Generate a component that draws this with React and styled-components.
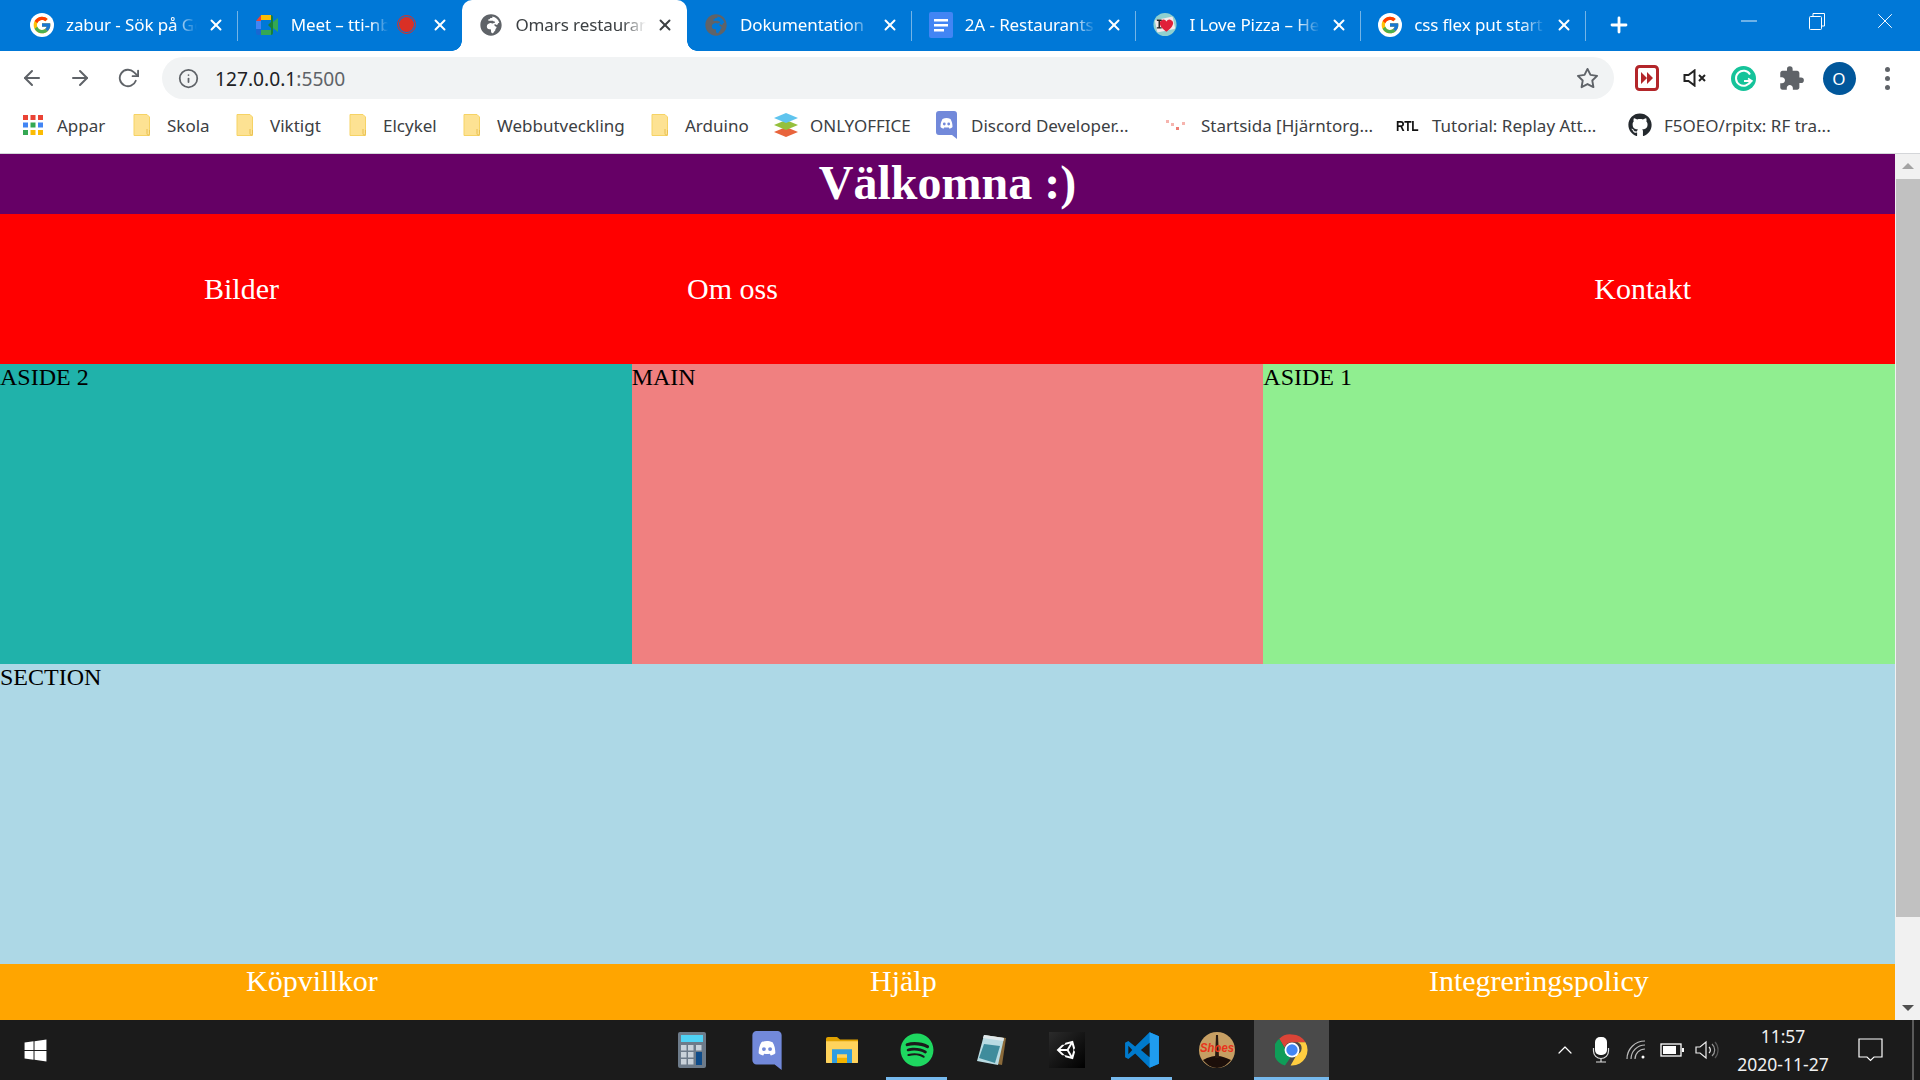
import React from "react";
import styled, { createGlobalStyle } from "styled-components";
import { FcGoogle } from "react-icons/fc";
import { FaGithub, FaSpotify, FaWindows, FaGlobeAfrica, FaUnity } from "react-icons/fa";
import { MdExtension } from "react-icons/md";
import { FiArrowLeft, FiArrowRight, FiRotateCw, FiInfo, FiStar, FiX, FiPlus, FiChevronUp, FiMinus } from "react-icons/fi";

const GlobalStyle = createGlobalStyle`
	html, body {
		margin: 0;
		padding: 0;
		overflow: hidden;
		background: #fff;
	}
	* { box-sizing: border-box; }
`;

const Screen = styled.div`
	width: 1920px;
	height: 1080px;
	display: flex;
	flex-direction: column;
	font-family: "Noto Sans", "Open Sans", sans-serif;
`;

// ---- browser chrome ----
const TabStrip = styled.div`
	height: 51px;
	background: #0078d7;
	display: flex;
	align-items: stretch;
	padding-left: 13px;
	flex: none;
`;
const Tab = styled.div`
	width: 224.7px;
	height: 51px;
	padding: 0 0 2px 17px;
	display: flex;
	align-items: center;
	position: relative;
	flex: none;
	color: ${({ $active }) => ($active ? "#3c4043" : "#fff")};
	background: ${({ $active }) => ($active ? "#fff" : "transparent")};
	border-radius: ${({ $active }) => ($active ? "10px 10px 0 0" : "0")};

	// separator line, or the flared foot of the active tab
	&::after {
		content: "";
		position: absolute;
		display: ${({ $sep, $active }) => ($sep || $active ? "block" : "none")};
		top: ${({ $active }) => ($active ? "41px" : "11px")};
		right: ${({ $active }) => ($active ? "-10px" : "0")};
		width: ${({ $active }) => ($active ? "10px" : "1px")};
		height: 30px;
		height: ${({ $active }) => ($active ? "10px" : "30px")};
		background: ${({ $active }) =>
			$active ? "radial-gradient(circle at 100% 0, transparent 9.5px, #fff 10px)" : "#74b4e6"};
	}
	&::before {
		content: "";
		position: absolute;
		display: ${({ $active }) => ($active ? "block" : "none")};
		top: 41px;
		left: -10px;
		width: 10px;
		height: 10px;
		background: radial-gradient(circle at 0 0, transparent 9.5px, #fff 10px);
	}
`;
const Favicon = styled.span`
	width: 24px;
	height: 24px;
	flex: none;
	display: flex;
	align-items: center;
	justify-content: center;
	border-radius: ${({ $round }) => ($round ? "50%" : "0")};
	background: ${({ $round }) => ($round ? "#fff" : "transparent")};
	color: #5f6368;
`;
const TabTitle = styled.span`
	margin-left: 12px;
	width: ${({ $short }) => ($short ? "97px" : "131px")};
	flex: none;
	overflow: hidden;
	white-space: nowrap;
	font-size: 17px;
	letter-spacing: -0.1px;
	-webkit-mask-image: linear-gradient(to right, #000 82%, transparent 100%);
	mask-image: linear-gradient(to right, #000 82%, transparent 100%);
`;
const RecDot = styled.span`
	width: 15px;
	height: 15px;
	margin-left: 11px;
	border-radius: 50%;
	flex: none;
	background: #d93025;
	outline: 1px solid #d93025;
	outline-offset: 1px;
`;
const TabClose = styled.span`
	position: absolute;
	right: 13px;
	top: 16px;
	display: flex;
	color: ${({ $active }) => ($active ? "#3c4043" : "#fff")};
`;
const NewTab = styled.div`
	width: 66px;
	display: flex;
	align-items: center;
	justify-content: center;
	color: #fff;
	padding-bottom: 2px;
`;
const WindowControls = styled.div`
	margin-left: auto;
	padding-right: 1px;
	display: flex;
	color: #fff;
`;
const WindowButton = styled.div`
	width: 68px;
	height: 42px;
	display: flex;
	align-items: center;
	justify-content: center;
`;

const Toolbar = styled.div`
	height: 54px;
	flex: none;
	background: #fff;
	display: flex;
	align-items: center;
	padding-left: 8px;
	color: #5f6368;
`;
const NavIcon = styled.div`
	width: 48px;
	display: flex;
	justify-content: center;
	flex: none;
`;
const Omnibox = styled.div`
	margin: 0 9px 0 10px;
	width: 1452px;
	height: 42px;
	border-radius: 21px;
	background: #f1f3f4;
	display: flex;
	align-items: center;
	padding: 0 15px 0 16px;
	flex: none;
`;
const Url = styled.span`
	margin-left: 16px;
	font-size: 19.2px;
	color: #202124;
	span {
		color: #5f6368;
	}
`;
const StarSlot = styled.span`
	margin-left: auto;
	display: flex;
`;
const Extension = styled.div`
	width: 48px;
	display: flex;
	justify-content: center;
	align-items: center;
	flex: none;
`;
const Avatar = styled.div`
	width: 33px;
	height: 33px;
	border-radius: 50%;
	background: #01579b;
	color: #fff;
	font-size: 17px;
	display: flex;
	align-items: center;
	justify-content: center;
`;
const MenuDots = styled.div`
	display: flex;
	flex-direction: column;
	gap: 4px;
	span {
		width: 5px;
		height: 5px;
		border-radius: 50%;
		background: #5f6368;
	}
`;

const BookmarkBar = styled.div`
	height: 49px;
	flex: none;
	display: flex;
	align-items: center;
	padding: 0 0 8px 23px;
	background: #fff;
	border-bottom: 1px solid #d4d6d9;
`;
const Bookmark = styled.div`
	width: ${({ $w }) => $w}px;
	flex: none;
	display: flex;
	align-items: center;
	gap: ${({ $gap }) => $gap ?? 16}px;
	font-size: 17px;
	color: #3c4043;
	white-space: nowrap;
`;

// ---- the page itself ----
const Viewport = styled.div`
	flex: 1;
	min-height: 0;
	display: flex;
`;
const Page = styled.div`
	width: 1895px;
	display: flex;
	flex-direction: column;
	font-family: "Liberation Serif", "Times New Roman", serif;
`;
const Banner = styled.h1`
	margin: 0;
	height: 60px;
	background: #660066;
	color: #fff;
	font-size: 48px;
	line-height: 57px;
	text-align: center;
	font-weight: bold;
`;
const MainNav = styled.nav`
	height: 150px;
	background: #f00;
	color: #fff;
	font-size: 30px;
	display: flex;
	align-items: center;
	padding: 0 204px 0 204px;
`;
const NavLink = styled.a`
	margin-left: ${({ $left }) => $left || "0"};
`;
const Row = styled.div`
	display: grid;
	grid-template-columns: 1fr 1fr 1fr;
`;
const Panel = styled.div`
	height: 300px;
	font-size: 24px;
	line-height: 27px;
	color: #000;
	background: ${({ $bg }) => $bg};
`;
const SiteFooter = styled.footer`
	height: 56px;
	background: #ffa500;
	color: #fff;
	font-size: 30px;
	line-height: 34px;
	display: flex;
	justify-content: space-around;
`;

const Scrollbar = styled.div`
	width: 25px;
	background: #f1f1f1;
	display: flex;
	flex-direction: column;
	align-items: center;
	justify-content: space-between;
	position: relative;
`;
const ScrollArrow = styled.div`
	width: 0;
	height: 0;
	margin: 9px 0;
	border-left: 6px solid transparent;
	border-right: 6px solid transparent;
	border-bottom: ${({ $up }) => ($up ? "6px solid #a3a3a3" : "0")};
	border-top: ${({ $up }) => ($up ? "0" : "6px solid #505050")};
`;
const ScrollThumb = styled.div`
	position: absolute;
	top: 25px;
	left: 1px;
	right: 0;
	height: 738px;
	background: #c1c1c1;
`;

// ---- windows taskbar ----
const Taskbar = styled.div`
	height: 60px;
	flex: none;
	background: #1b1b1b;
	display: flex;
	align-items: center;
	color: #fff;
`;
const StartButton = styled.div`
	width: 70px;
	display: flex;
	justify-content: center;
`;
const PinnedApps = styled.div`
	margin-left: 584px;
	display: flex;
	height: 60px;
`;
const AppSlot = styled.div`
	width: 75px;
	height: 60px;
	padding: 0 1px;
	display: flex;
	align-items: center;
	justify-content: center;
	position: relative;
	background: ${({ $active }) => ($active ? "#4a4a4a" : "transparent")};
	&::after {
		content: "";
		position: absolute;
		bottom: 0;
		height: 3px;
		left: ${({ $active }) => ($active ? "0" : "7px")};
		right: ${({ $active }) => ($active ? "0" : "7px")};
		background: #76b9ed;
		display: ${({ $open }) => ($open ? "block" : "none")};
	}
`;
const Tray = styled.div`
	margin-left: auto;
	display: flex;
	align-items: center;
	height: 60px;
`;
const TrayIcon = styled.div`
	width: 35.500px;
	display: flex;
	justify-content: center;
	align-items: center;
`;
const Clock = styled.div`
	width: 112px;
	margin-left: 2px;
	text-align: center;
	font-size: 17.500px;
	line-height: 28px;
	color: #f0f0f0;
`;
const Notification = styled.div`
	width: 73px;
	padding-right: 10px;
	display: flex;
	justify-content: center;
`;
const DesktopEdge = styled.div`
	width: 2px;
	height: 60px;
	margin-right: 6px;
	background: #5a5a5a;
`;

// ---- drawn icons ----
const MeetIcon = () => (
	<svg width="24" height="22" viewBox="0 0 24 22">
		<path d="M6 1h10v5H6z" fill="#fbbc04" />
		<path d="M6 1v6H1z" fill="#ea4335" />
		<path d="M1 7h5v8H1z" fill="#4285f4" />
		<path d="M1 15h5v6H3a2 2 0 0 1-2-2z" fill="#1967d2" />
		<path d="M6 16h10v5H6z" fill="#34a853" />
		<path d="M16 1v7l-3 3 3 3v7h0a2 2 0 0 0 2-2V3a2 2 0 0 0-2-2z" fill="#188038" />
		<path d="M18 8l5-4v14l-5-4z" fill="#34a853" />
	</svg>
);
const DocsIcon = () => (
	<svg width="24" height="26" viewBox="0 0 24 26">
		<rect width="24" height="26" rx="2" fill="#4285f4" />
		<path d="M5 7h14v2.600H5zM5 12h14v2.600H5zM5 17h10v2.600H5z" fill="#fff" />
	</svg>
);
const PizzaIcon = () => (
	<svg width="25" height="25" viewBox="0 0 25 25">
		<circle cx="12.500" cy="12.500" r="12" fill="#8fd0cf" />
		<rect x="3" y="6" width="19" height="13" rx="1" fill="#f4e9ea" transform="rotate(-12 12.500 12.500)" />
		<path d="M14 20s-7-4.500-7-9a3.700 3.700 0 0 1 7-1.600A3.700 3.700 0 0 1 21 11c0 4.500-7 9-7 9z" fill="#e0203a" />
		<path d="M4 8h5M6.500 8v8M4 16h5" stroke="#222" strokeWidth="1.500" />
	</svg>
);
const AppsGrid = () => (
	<svg width="20" height="20" viewBox="0 0 20 20">
		{["#ea4335", "#ea4335", "#ea4335", "#4285f4", "#34a853", "#4285f4", "#34a853", "#fbbc04", "#fbbc04"].map((c, i) => (
			<rect key={i} x={(i % 3) * 7.500} y={Math.floor(i / 3) * 7.500} width="5" height="5" fill={c} />
		))}
	</svg>
);
const FolderIcon = () => (
	<svg width="18" height="22" viewBox="0 0 18 22">
		<path d="M1 .5h13l2.500 2.500v18.500H1z" fill="#fde293" stroke="#f6d365" />
		<path d="M14 15v4.500c0 2 2.500 2 2.500 0V16" fill="none" stroke="#e8bf50" />
	</svg>
);
const OnlyOfficeIcon = () => (
	<svg width="26" height="24" viewBox="0 0 26 24">
		<path d="M13 14l12 5-12 5-12-5z" fill="#e8643c" />
		<path d="M13 7l12 5-12 5-12-5z" fill="#95c03c" />
		<path d="M13 0l12 5-12 5L1 5z" fill="#5fc4ee" />
	</svg>
);
const DiscordTile = ({ size = 21, tall = 25 }) => (
	<svg width={size} height={tall + 3} viewBox="0 0 21 28">
		<path d="M3 0h15a3 3 0 0 1 3 3v25l-5-4H3a3 3 0 0 1-3-3V3a3 3 0 0 1 3-3z" fill="#7289da" />
		<path d="M6.500 8c3-1.200 5-1.200 8 0 1.500 2.500 2 5 2 8-1 1-2.500 1.500-3.300 1.500l-.7-1.200c-1.500.4-2.500.4-4 0l-.7 1.200C7 17.500 5.500 17 4.500 16c0-3 .5-5.500 2-8z" fill="#fff" />
		<circle cx="8.300" cy="13" r="1.400" fill="#7289da" />
		<circle cx="12.700" cy="13" r="1.400" fill="#7289da" />
	</svg>
);
const HjarntorgetIcon = () => (
	<svg width="22" height="14" viewBox="0 0 22 14">
		<g fill="#f6b4ae">
			<rect x="1" y="2" width="3" height="3" />
			<rect x="6" y="5" width="3" height="3" />
			<rect x="11" y="9" width="3" height="3" fill="#ee7d74" />
			<rect x="17" y="4" width="3" height="3" />
		</g>
	</svg>
);
const RtlIcon = styled.span`
	font-family: "Liberation Sans", sans-serif;
	font-size: 15px;
	font-weight: bold;
	color: #111;
	width: 24px;
	letter-spacing: -0.500px;
	flex: none;
	transform: scaleX(0.8);
	transform-origin: left center;
	margin-right: 12px;
`;
const ForwardBadge = () => (
	<svg width="24" height="26" viewBox="0 0 24 26">
		<rect x="1.500" y="1.500" width="21" height="23" rx="3" fill="#fff" stroke="#b3262a" strokeWidth="3" />
		<path d="M6 7l6 6-6 6zM12 7l6 6-6 6z" fill="#b3262a" />
	</svg>
);
const MuteIcon = () => (
	<svg width="24" height="18" viewBox="0 0 24 18">
		<path d="M1.500 6h4l6-4.500v15l-6-4.500h-4z" fill="none" stroke="#222" strokeWidth="2" />
		<path d="M16 6l6 6M22 6l-6 6" stroke="#222" strokeWidth="2" />
	</svg>
);
const GrammarlyIcon = () => (
	<svg width="25" height="25" viewBox="0 0 25 25">
		<circle cx="12.500" cy="12.500" r="12.500" fill="#15c39a" />
		<path d="M19 8.500A7.500 7.500 0 1 0 19.500 15H13" fill="none" stroke="#fff" strokeWidth="2" />
		<path d="M17 12.500l4 2.500-3 3" fill="none" stroke="#fff" strokeWidth="1.500" />
	</svg>
);
const CalcIcon = () => (
	<svg width="28" height="36" viewBox="0 0 28 36">
		<rect width="28" height="36" rx="2" fill="#6d7b8a" />
		<rect x="3" y="3" width="22" height="7" fill="#4fd2f5" />
		{[[3, 13], [10, 13], [18, 13], [3, 20], [10, 20], [3, 27], [10, 27]].map(([x, y]) => (
			<rect key={`${x}-${y}`} x={x} y={y} width="5.500" height="5.500" fill="#c9d2da" />
		))}
		<rect x="18" y="20" width="6" height="13" fill="#0f4c8a" />
	</svg>
);
const ExplorerIcon = () => (
	<svg width="32" height="26" viewBox="0 0 32 30" preserveAspectRatio="none">
		<path d="M0 2a2 2 0 0 1 2-2h9l3 3h18v7H0z" fill="#e0a100" />
		<path d="M0 5h32v24a1 1 0 0 1-1 1H1a1 1 0 0 1-1-1z" fill="#ffd35c" />
		<path d="M6 14h20v16h-5v-10H11v10H6z" fill="#2f9de0" />
		<rect x="11" y="24" width="10" height="6" fill="#f4b400" />
	</svg>
);
const NotepadIcon = () => (
	<svg width="32" height="32" viewBox="0 0 32 32">
		<path d="M8 1l22 3-4 27-5-1z" fill="#8a6a3a" />
		<path d="M8 1l20 3-6 27-21-4z" fill="#b9dbe2" />
		<path d="M3 24L8 10l16 2-5 17z" fill="#3f8c9c" />
		<path d="M8 1l20 3-.7 3L7 4z" fill="#dfe7ea" />
	</svg>
);
const UnityTile = styled.div`
	width: 36px;
	height: 36px;
	background: linear-gradient(135deg, #2b2b2b, #000);
	display: flex;
	align-items: center;
	justify-content: center;
	color: #fff;
`;
const VsCodeIcon = () => (
	<svg width="36" height="36" viewBox="0 0 100 100">
		<path d="M71 99L31 60 12 75 3 70V30l9-5 19 15L71 1l26 11v76z" fill="#007acc" />
		<path d="M71 99V1l26 11v76z" fill="#1f9cf0" />
		<path d="M71 30L47 50l24 20z" fill="#1b1b1b" />
		<path d="M12 38v24l11-12z" fill="#1b1b1b" />
	</svg>
);
const ShoesIcon = () => (
	<svg width="36" height="36" viewBox="0 0 36 36">
		<ellipse cx="18" cy="18" rx="18" ry="18" fill="#c79f63" />
		<path d="M4 28c6-3 9-4 14-4s9 2 14 4c-4 5-9 8-14 8S8 33 4 28z" fill="#1c0f0a" />
		<path d="M17 3h2l1 23h-4z" fill="#2a1a12" />
		<text x="18" y="20" textAnchor="middle" fontFamily="Liberation Sans" fontStyle="italic" fontSize="13" fontWeight="bold" fill="#e8341c" textLength="34" lengthAdjust="spacingAndGlyphs">
			Shoes
		</text>
	</svg>
);
const ChromeIcon = () => (
	<svg width="34" height="34" viewBox="0 0 48 48">
		<path d="M24 2a22 22 0 0 1 19 11H24a11 11 0 0 0-10.500 7.500L6 8A22 22 0 0 1 24 2z" fill="#db4437" />
		<path d="M6 8l9.500 16.500A9 9 0 0 0 22 34.500L14 46A22 22 0 0 1 6 8z" fill="#0f9d58" />
		<path d="M43 13a22 22 0 0 1-19 33h-2l9-16a9 9 0 0 0 1-17z" fill="#ffcd40" />
		<circle cx="24" cy="24" r="10.500" fill="#fff" />
		<circle cx="24" cy="24" r="8" fill="#4285f4" />
	</svg>
);
const MicIcon = () => (
	<svg width="18" height="26" viewBox="0 0 18 26">
		<rect x="3" y="0" width="12" height="18" rx="5" fill="#fff" />
		<path d="M1.500 11v3a7.500 7.500 0 0 0 15 0v-3M9 21.500V25M4 25h10" fill="none" stroke="#ddd" strokeWidth="1.200" />
	</svg>
);
const WifiIcon = () => (
	<svg width="20" height="20" viewBox="0 0 20 20" fill="none" stroke="#bbb" strokeWidth="1.200">
		<path d="M1 19A18 18 0 0 1 19 1" />
		<path d="M5 19A14 14 0 0 1 19 5" />
		<path d="M9 19A10 10 0 0 1 19 9" />
		<circle cx="17" cy="17" r="1.500" fill="#fff" stroke="none" />
	</svg>
);
const BatteryIcon = () => (
	<svg width="24" height="14" viewBox="0 0 24 14">
		<rect x="1" y="1" width="20" height="12" fill="none" stroke="#fff" strokeWidth="1.300" />
		<rect x="3" y="3" width="13" height="8" fill="#fff" />
		<rect x="22" y="5" width="2" height="4" fill="#fff" />
	</svg>
);
const SpeakerIcon = () => (
	<svg width="24" height="20" viewBox="0 0 24 20" fill="none" stroke="#eee" strokeWidth="1.200">
		<path d="M1 7h4l6-5v16l-6-5H1z" />
		<path d="M14 7a4 4 0 0 1 0 6" />
		<path d="M17 4a8 8 0 0 1 0 12" stroke="#999" />
		<path d="M20 2a12 12 0 0 1 0 16" stroke="#555" />
	</svg>
);
const BubbleIcon = () => (
	<svg width="26" height="24" viewBox="0 0 26 24" fill="none" stroke="#fff" strokeWidth="1.200">
		<path d="M1 1h23v18h-8l-3.500 3.500L9 19H1z" />
	</svg>
);

const G = <FcGoogle size={20} />;

const tabs = [
	{ title: "zabur - Sök på Google", icon: G, round: true, sep: true },
	{ title: "Meet – tti-nbcx-qsd", icon: <MeetIcon />, rec: true },
	{ title: "Omars restaurang", icon: <FaGlobeAfrica size={22} />, active: true },
	{ title: "Dokumentation", icon: <FaGlobeAfrica size={22} />, sep: true },
	{ title: "2A - Restaurants", icon: <DocsIcon />, sep: true },
	{ title: "I Love Pizza – Hem", icon: <PizzaIcon />, sep: true },
	{ title: "css flex put start", icon: G, round: true, sep: true },
];

const bookmarks = [
	{ label: "Appar", icon: <AppsGrid />, w: 110, gap: 14 },
	{ label: "Skola", icon: <FolderIcon />, w: 103 },
	{ label: "Viktigt", icon: <FolderIcon />, w: 113 },
	{ label: "Elcykel", icon: <FolderIcon />, w: 114 },
	{ label: "Webbutveckling", icon: <FolderIcon />, w: 188 },
	{ label: "Arduino", icon: <FolderIcon />, w: 122 },
	{ label: "ONLYOFFICE", icon: <OnlyOfficeIcon />, w: 163, gap: 11 },
	{ label: "Discord Developer...", icon: <DiscordTile />, w: 229, gap: 14 },
	{ label: "Startsida [Hjärntorg...", icon: <HjarntorgetIcon />, w: 231, gap: 14 },
	{ label: "Tutorial: Replay Att...", icon: <RtlIcon>RTL</RtlIcon>, w: 232, gap: 0 },
	{ label: "F5OEO/rpitx: RF tra...", icon: <FaGithub size={24} color="#24292e" />, w: 240, gap: 12 },
];

const apps = [
	{ icon: <CalcIcon /> },
	{ icon: <DiscordTile size={30} tall={36} /> },
	{ icon: <ExplorerIcon /> },
	{ icon: <FaSpotify size={34} color="#1ed760" />, open: true },
	{ icon: <NotepadIcon /> },
	{ icon: <UnityTile><FaUnity size={22} /></UnityTile> },
	{ icon: <VsCodeIcon />, open: true },
	{ icon: <ShoesIcon /> },
	{ icon: <ChromeIcon />, open: true, active: true },
];

export default function App() {
	return (
		<Screen>
			<GlobalStyle />
			<TabStrip>
				{tabs.map((tab) => (
					<Tab key={tab.title} $active={tab.active} $sep={tab.sep}>
						<Favicon $round={tab.round}>{tab.icon}</Favicon>
						<TabTitle $short={tab.rec}>{tab.title}</TabTitle>
						{tab.rec && <RecDot />}
						<TabClose $active={tab.active}>
							<FiX size={18} strokeWidth={2.6} />
						</TabClose>
					</Tab>
				))}
				<NewTab>
					<FiPlus size={24} strokeWidth={2.8} />
				</NewTab>
				<WindowControls>
					<WindowButton><FiMinus size={26} strokeWidth={0.8} /></WindowButton>
					<WindowButton>
						<svg width="16" height="17" viewBox="0 0 16 17" fill="none" stroke="#fff">
							<rect x="0.500" y="3.500" width="12" height="13" rx="1" />
							<path d="M4 3V.5h11.500v12.500H13" />
						</svg>
					</WindowButton>
					<WindowButton><FiX size={26} strokeWidth={0.9} /></WindowButton>
				</WindowControls>
			</TabStrip>

			<Toolbar>
				<NavIcon><FiArrowLeft size={24} strokeWidth={2} /></NavIcon>
				<NavIcon><FiArrowRight size={24} strokeWidth={2} /></NavIcon>
				<NavIcon><FiRotateCw size={22} strokeWidth={2} /></NavIcon>
				<Omnibox>
					<FiInfo size={21} strokeWidth={2} />
					<Url>127.0.0.1<span>:5500</span></Url>
					<StarSlot><FiStar size={23} strokeWidth={2} /></StarSlot>
				</Omnibox>
				<Extension><ForwardBadge /></Extension>
				<Extension><MuteIcon /></Extension>
				<Extension><GrammarlyIcon /></Extension>
				<Extension><MdExtension size={27} color="#5f6368" /></Extension>
				<Extension><Avatar>O</Avatar></Extension>
				<Extension><MenuDots><span /><span /><span /></MenuDots></Extension>
			</Toolbar>

			<BookmarkBar>
				{bookmarks.map((b) => (
					<Bookmark key={b.label} $w={b.w} $gap={b.gap}>
						{b.icon}
						<span>{b.label}</span>
					</Bookmark>
				))}
			</BookmarkBar>

			<Viewport>
				<Page>
					<Banner>Välkomna :)</Banner>
					<MainNav>
						<NavLink>Bilder</NavLink>
						<NavLink $left="408px">Om oss</NavLink>
						<NavLink $left="auto">Kontakt</NavLink>
					</MainNav>
					<Row>
						<Panel $bg="#20b2aa">ASIDE 2</Panel>
						<Panel $bg="#f08080">MAIN</Panel>
						<Panel $bg="#90ee90">ASIDE 1</Panel>
					</Row>
					<Panel $bg="#add8e6">SECTION</Panel>
					<SiteFooter>
						<span>Köpvillkor</span>
						<span>Hjälp</span>
						<span>Integreringspolicy</span>
					</SiteFooter>
				</Page>
				<Scrollbar>
					<ScrollArrow $up />
					<ScrollThumb />
					<ScrollArrow />
				</Scrollbar>
			</Viewport>

			<Taskbar>
				<StartButton><FaWindows size={25} /></StartButton>
				<PinnedApps>
					{apps.map((app, i) => (
						<AppSlot key={i} $open={app.open} $active={app.active}>{app.icon}</AppSlot>
					))}
				</PinnedApps>
				<Tray>
					<TrayIcon><FiChevronUp size={24} strokeWidth={1.2} /></TrayIcon>
					<TrayIcon><MicIcon /></TrayIcon>
					<TrayIcon><WifiIcon /></TrayIcon>
					<TrayIcon><BatteryIcon /></TrayIcon>
					<TrayIcon><SpeakerIcon /></TrayIcon>
					<Clock>11:57<br />2020-11-27</Clock>
					<Notification><BubbleIcon /></Notification>
					<DesktopEdge />
				</Tray>
			</Taskbar>
		</Screen>
	);
}
